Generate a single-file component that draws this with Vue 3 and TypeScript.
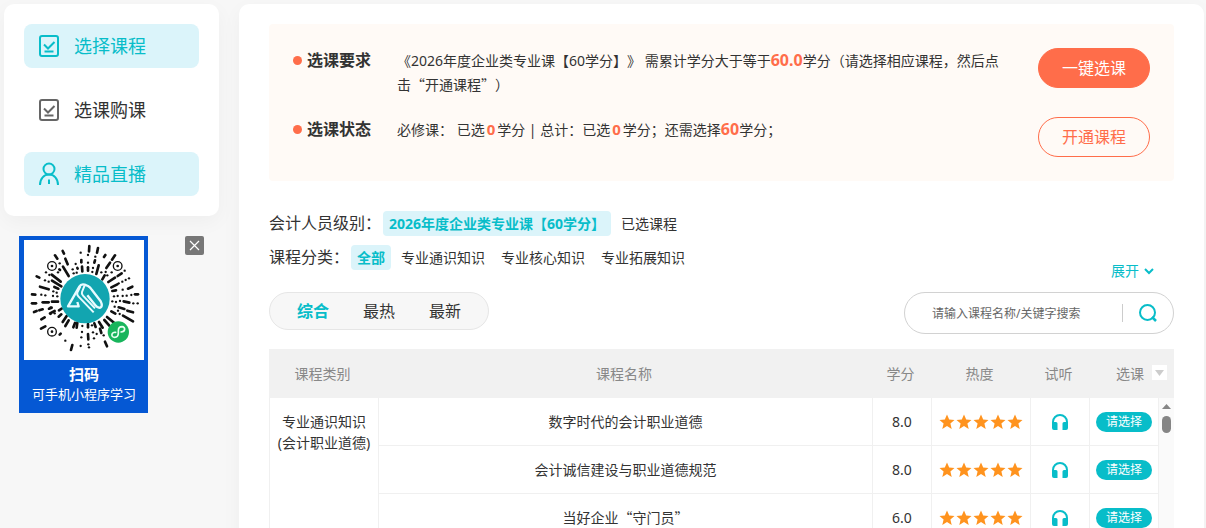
<script setup lang="ts">
import { ref } from 'vue'

interface Course {
  name: string
  credit: string
}

const menu = [
  { label: '选择课程', icon: 'check', active: true },
  { label: '选课购课', icon: 'check', active: false },
  { label: '精品直播', icon: 'user', active: true },
]

const categories = ['全部', '专业通识知识', '专业核心知识', '专业拓展知识']
const activeCategory = ref('全部')
const sorts = ['综合', '最热', '最新']
const activeSort = ref('综合')
const keyword = ref('')
const showCode = ref(true)

const courses: Course[] = [
  { name: '数字时代的会计职业道德', credit: '8.0' },
  { name: '会计诚信建设与职业道德规范', credit: '8.0' },
  { name: '当好企业“守门员”', credit: '6.0' },
]

// Strokes of the radial mini-program code: x1, y1, x2, y2
const dashes: number[][] = [
  [116, 33, 120, 41], [93, 46, 100, 56], [124, 56, 131, 73], [172, 60, 172, 67], [174, 80, 175, 94],
  [117, 80, 134, 108], [160, 84, 161, 86], [38, 109, 46, 113], [83, 104, 110, 125], [84, 122, 112, 139],
  [48, 140, 74, 148], [91, 141, 103, 146], [24, 163, 34, 164], [196, 18, 195, 34], [222, 24, 219, 38],
  [213, 61, 211, 68], [240, 51, 244, 45], [224, 76, 217, 102], [192, 82, 192, 92], [258, 68, 247, 84],
  [273, 46, 264, 59], [242, 106, 235, 118], [293, 100, 281, 108], [273, 113, 253, 126], [280, 133, 262, 142],
  [312, 146, 325, 140], [265, 153, 276, 151], [333, 163, 342, 163], [299, 184, 316, 188], [284, 202, 301, 207],
  [297, 227, 327, 244], [310, 212, 327, 217], [24, 190, 36, 190], [56, 187, 74, 187], [84, 185, 102, 185],
  [30, 216, 38, 213], [46, 211, 56, 208], [75, 206, 83, 203], [51, 266, 64, 259], [52, 238, 62, 232],
  [78, 220, 92, 213], [105, 211, 113, 206], [104, 230, 112, 223], [116, 246, 128, 228], [124, 258, 134, 241],
  [107, 284, 110, 281], [145, 315, 141, 330], [148, 262, 153, 249], [160, 248, 158, 263], [192, 282, 193, 298],
  [192, 252, 192, 262], [211, 250, 215, 261], [228, 266, 232, 279], [225, 246, 236, 263], [243, 305, 249, 319],
  [249, 231, 271, 249], [241, 240, 256, 257], [262, 214, 274, 221], [106, 88, 108, 90],
]

const dots: number[][] = [
  [170, 38], [155, 72], [146, 88], [149, 100], [158, 98], [107, 70], [102, 97], [66, 97], [76, 105],
  [63, 121], [74, 125], [88, 154], [98, 158], [52, 164], [64, 166], [87, 168], [100, 169], [192, 45], [192, 68],
  [214, 50], [207, 84], [205, 96], [232, 97], [245, 96], [302, 92], [263, 97], [250, 106], [284, 130],
  [295, 125], [305, 120], [315, 115], [296, 149], [270, 169], [281, 168], [296, 168], [308, 167], [322, 165],
  [265, 184], [276, 186], [288, 183], [328, 190], [341, 190], [272, 200], [287, 222], [80, 202], [80, 222],
  [92, 220], [124, 302], [175, 258], [174, 276], [172, 292], [170, 318], [193, 313], [207, 277], [210, 295],
  [218, 282], [195, 322], [239, 286], [204, 256], [282, 212],
]
</script>

<template>
  <div class="page">
    <aside class="side">
      <nav class="menu">
        <a v-for="m in menu" :key="m.label" href="#" class="menu-item" :class="{ active: m.active }">
          <svg v-if="m.icon === 'check'" width="22" height="24" viewBox="0 0 22 24" fill="none" stroke="currentColor" stroke-width="2">
            <rect x="2" y="2" width="18" height="20" rx="2" />
            <path d="M6 10.5 10 14.5 16.5 8M6.5 17.5H15.5" />
          </svg>
          <svg v-else width="22" height="24" viewBox="0 0 22 24" fill="none" stroke="currentColor" stroke-width="2">
            <circle cx="11" cy="7" r="5.500" />
            <path d="M2 23C2 16.500 6 12.500 11 12.500S20 16.500 20 23M11 17.500V22" />
          </svg>
          <span>{{ m.label }}</span>
        </a>
      </nav>

      <div v-if="showCode" class="code-row">
        <figure class="code">
          <svg class="code-img" viewBox="0 0 360 360" role="img" aria-label="小程序码">
            <rect width="360" height="360" fill="#fff" />
            <g stroke="#111" stroke-width="8" stroke-linecap="round">
              <line v-for="(d, i) in dashes" :key="i" :x1="d[0]" :y1="d[1]" :x2="d[2]" :y2="d[3]" />
            </g>
            <circle v-for="(d, i) in dots" :key="'d' + i" :cx="d[0]" :cy="d[1]" r="3.500" fill="#111" />
            <g v-for="(f, i) in [[84, 78], [281, 78], [84, 275]]" :key="'f' + i">
              <circle :cx="f[0]" :cy="f[1]" r="13" fill="#fff" stroke="#111" stroke-width="4" />
              <circle :cx="f[0]" :cy="f[1]" r="4" fill="#111" />
            </g>
            <circle cx="183" cy="176" r="74" fill="#12a5b0" />
            <g fill="none" stroke="#e8fbff" stroke-width="7" stroke-linejoin="round">
              <path d="M160 186 164 199H132L166 140Q171 131 182 134L192 138Q199 142 204 150L230 184Q237 199 229 203Q221 205 214 196L190 166" />
              <path d="M169 139 160 158Q158 164 163 169L209 217M182 136 174 156Q172 162 177 167L213 205" stroke-width="6" />
            </g>
            <circle cx="283" cy="276" r="32" fill="#18b55c" />
            <path d="M275 277C261 275 260 292 272 292C280 292 283 287 283 279V272C283 264 287 260 294 260C305 261 305 275 291 276" fill="none" stroke="#e6fff0" stroke-width="5" stroke-linecap="round" />
          </svg>
          <figcaption><strong>扫码</strong><span>可手机小程序学习</span></figcaption>
        </figure>
        <button class="close" type="button" aria-label="关闭" @click="showCode = false">
          <svg width="19" height="19" viewBox="0 0 19 19" stroke="#fff" stroke-width="1.200"><path d="M5 5 14 14M14 5 5 14" /></svg>
        </button>
      </div>
    </aside>

    <main class="main">
      <section class="notice">
        <div class="notice-row">
          <h2>选课要求</h2>
          <p>《2026年度企业类专业课【60学分】》 需累计学分大于等于<b>60.0</b>学分（请选择相应课程，然后点<span class="cjk">击“开通课程”）</span></p>
          <button class="pill solid" type="button">一键选课</button>
        </div>
        <div class="notice-row">
          <h2>选课状态</h2>
          <p>必修课： 已选<b class="num">0</b>学分 | 总计：已选<b class="num">0</b>学分；还需选择<b>60</b>学分；</p>
          <button class="pill" type="button">开通课程</button>
        </div>
      </section>

      <section class="filters">
        <div class="filter-list">
          <div class="filter">
            <span class="filter-label">会计人员级别：</span>
            <a href="#" class="tag on">2026年度企业类专业课【60学分】</a>
            <a href="#" class="tag">已选课程</a>
          </div>
          <div class="filter">
            <span class="filter-label">课程分类：</span>
            <a v-for="c in categories" :key="c" href="#" class="tag" :class="{ on: c === activeCategory }" @click.prevent="activeCategory = c">{{ c }}</a>
          </div>
        </div>
        <button class="expand" type="button">
          展开
          <svg width="10" height="8" viewBox="0 0 10 8" fill="none" stroke="currentColor" stroke-width="2"><path d="M1 2 5 6 9 2" /></svg>
        </button>
      </section>

      <div class="tools">
        <div class="sorts">
          <button v-for="s in sorts" :key="s" type="button" :class="{ on: s === activeSort }" @click="activeSort = s">{{ s }}</button>
        </div>
        <form class="search" @submit.prevent>
          <input v-model="keyword" type="text" aria-label="搜索课程" placeholder="请输入课程名称/关键字搜索" />
          <button type="submit" aria-label="搜索">
            <svg width="20" height="20" viewBox="0 0 20 20" fill="none" stroke="#08bdc9" stroke-width="2"><circle cx="9.500" cy="9.500" r="7.500" /><path d="M14 14 18 18" stroke-width="2.500" /></svg>
          </button>
        </form>
      </div>

      <table class="courses">
        <colgroup>
          <col class="c-kind" /><col /><col class="c-credit" /><col class="c-heat" /><col class="c-credit" /><col class="c-pick" /><col class="c-bar" />
        </colgroup>
        <thead>
          <tr>
            <th>课程类别</th>
            <th>课程名称</th>
            <th>学分</th>
            <th>热度</th>
            <th>试听</th>
            <th colspan="2">
              <div class="pick-head">
                选课
                <button type="button" aria-label="筛选"><svg width="15" height="15" viewBox="0 0 15 15"><path d="M3 5H12L7.500 11Z" fill="#ccc" /></svg></button>
              </div>
            </th>
          </tr>
        </thead>
        <tbody>
          <tr v-for="(c, i) in courses" :key="c.name">
            <td v-if="i === 0" class="kind" :rowspan="courses.length">专业通识知识<br />(会计职业道德)</td>
            <td class="name">{{ c.name }}</td>
            <td>{{ c.credit }}</td>
            <td>
              <svg class="icon" width="84" height="16" viewBox="0 0 84 16" fill="#ff931e" role="img" aria-label="5 星">
                <path v-for="n in 5" :key="n" :transform="`translate(${(n - 1) * 17} 0)`" d="M8 .5 10.200 5.600 15.500 6 11.400 9.500 12.700 15 8 12.100 3.300 15 4.600 9.500 .5 6 5.800 5.600Z" />
              </svg>
            </td>
            <td>
              <button class="listen" type="button" aria-label="试听">
                <svg class="icon" width="18" height="18" viewBox="0 0 18 18">
                  <path d="M2 12V9A7 7 0 0 1 16 9V12" fill="none" stroke="#08bdc9" stroke-width="2" />
                  <path d="M1 9H5Q6.500 9 6.500 10.500V17H3Q1 17 1 15ZM17 9H13Q11.500 9 11.500 10.500V17H15Q17 17 17 15Z" fill="#08bdc9" />
                </svg>
              </button>
            </td>
            <td><button class="pick" type="button">请选择</button></td>
            <td v-if="i === 0" class="bar" :rowspan="courses.length">
              <svg class="icon" width="9" height="5" viewBox="0 0 9 5"><path d="M0 5 4.500 0 9 5Z" fill="#858585" /></svg>
              <div class="thumb"></div>
            </td>
          </tr>
        </tbody>
      </table>
    </main>
  </div>
</template>

<style>
body {
  background: #f7f7f7;
}
</style>

<style scoped>
* {
  box-sizing: border-box;
}
.page {
  display: flex;
  align-items: flex-start;
  gap: 20px;
  height: 100vh;
  padding: 4px 2px 0 4px;
  overflow: hidden;
  font-family: "Noto Sans", "Noto Sans CJK SC", sans-serif;
  font-size: 14px;
  text-spacing-trim: space-all;
  color: #333;
}
button {
  padding: 0;
  border: 0;
  background: none;
  font: inherit;
  color: inherit;
  cursor: pointer;
}
a {
  color: inherit;
  text-decoration: none;
}
.icon {
  display: block;
  margin: 0 auto;
}
.cjk,
.name {
  font-family: "Noto Sans CJK SC", sans-serif;
}
.cjk {
  line-height: 20px;
}
.side {
  flex: none;
  width: 215px;
}
.menu {
  display: flex;
  flex-direction: column;
  gap: 20px;
  padding: 20px;
  border-radius: 10px;
  background: #fff;
  box-shadow: 0 6px 20px rgba(0, 0, 0, 0.04);
}
.menu-item {
  display: flex;
  align-items: center;
  gap: 14px;
  height: 44px;
  padding-left: 14px;
  border-radius: 8px;
  font-size: 18px;
}
.menu-item span {
  padding-bottom: 2px;
}
.menu-item svg {
  color: #666;
}
.menu-item.active {
  background: #dbf4fa;
}
.menu-item.active,
.menu-item.active svg {
  color: #08bdc9;
}
.code-row {
  display: flex;
  justify-content: space-between;
  align-items: flex-start;
  padding: 20px 15px 0;
}
.code {
  width: 129px;
  margin: 0;
  padding: 4px 4px 9px 5px;
  background: #0558d4;
  color: #fff;
}
.code-img {
  display: block;
  width: 100%;
}
.code figcaption {
  display: flex;
  flex-direction: column;
  align-items: center;
  padding-top: 4px;
  font-size: 13px;
  line-height: 20px;
  white-space: nowrap;
}
.code strong {
  font-size: 15px;
}
.close {
  width: 19px;
  height: 19px;
  border-radius: 2px;
  background: #777;
}
.close svg {
  display: block;
}
.main {
  flex: 1;
  min-width: 0;
  padding: 20px 30px;
  border-radius: 10px;
  background: #fff;
  box-shadow: 0 6px 20px rgba(0, 0, 0, 0.04);
}
.notice {
  display: flex;
  flex-direction: column;
  gap: 20px;
  padding: 24px;
  border-radius: 4px;
  background: #fffaf6;
}
.notice-row {
  display: flex;
  align-items: flex-start;
}
.notice h2 {
  display: flex;
  align-items: center;
  gap: 5px;
  width: 104px;
  margin: 0;
  font-size: 16px;
  line-height: 24px;
}
.notice h2::before {
  content: "";
  width: 9px;
  height: 9px;
  border-radius: 50%;
  background: #ff6d4a;
}
.notice p {
  flex: 1;
  margin: 0;
  padding-top: 1px;
  line-height: 24px;
}
.notice b {
  font-size: 16px;
  line-height: 16px;
  color: #ff6d4a;
}
.notice .num {
  padding: 0 2px;
  font-size: 15px;
}
.pill {
  width: 112px;
  height: 40px;
  margin-left: 32px;
  padding-bottom: 2px;
  border: 1px solid #ff6d4a;
  border-radius: 20px;
  font-size: 16px;
  color: #ff6d4a;
}
.pill.solid {
  background: #ff6d4a;
  color: #fff;
}
.filters {
  display: flex;
  justify-content: space-between;
  align-items: flex-end;
  margin-top: 30px;
}
.filter-list {
  display: flex;
  flex-direction: column;
  gap: 9px;
  padding-bottom: 11px;
}
.filter {
  display: flex;
  align-items: center;
  gap: 4px;
  line-height: 25px;
}
.filter-label {
  margin-right: -2px;
  font-size: 16px;
}
.tag {
  padding: 0 6px;
  border-radius: 4px;
}
.tag.on {
  background: #dbf4fa;
  font-weight: 700;
  color: #08bdc9;
}
.expand {
  display: flex;
  align-items: center;
  gap: 5px;
  margin-right: 20px;
  line-height: 20px;
  color: #08bdc9;
}
.tools {
  display: flex;
  justify-content: space-between;
  align-items: flex-start;
  margin: 11px 0 15px;
}
.sorts {
  display: flex;
  gap: 34px;
  height: 38px;
  padding: 0 27px 2px;
  border: 1px solid #e6e6e6;
  border-radius: 19px;
  background: #f7f7f7;
  font-size: 16px;
}
.sorts .on {
  font-weight: 700;
  color: #08bdc9;
}
.search {
  display: flex;
  align-items: center;
  width: 270px;
  height: 42px;
  padding: 0 15px 0 27px;
  border: 1px solid #d2d2d2;
  border-radius: 21px;
}
.search input {
  flex: 1;
  min-width: 0;
  padding: 0;
  border: 0;
  outline: 0;
  background: none;
  font: inherit;
  font-size: 12px;
}
.search input::placeholder {
  color: #666;
}
.search button {
  display: flex;
  align-items: center;
  justify-content: flex-end;
  width: 36px;
  height: 18px;
  border-left: 1px solid #ccc;
}
.courses {
  width: 100%;
  table-layout: fixed;
  border-spacing: 0;
  text-align: center;
}
.c-kind {
  width: 109px;
}
.c-credit {
  width: 59px;
}
.c-heat {
  width: 99px;
}
.c-pick {
  width: 69px;
}
.c-bar {
  width: 16px;
}
.courses th {
  height: 49px;
  padding: 0 2px 2px 0;
  background: #f1f1f1;
  font-weight: 400;
  color: #888;
}
.pick-head {
  display: flex;
  justify-content: flex-end;
  align-items: center;
  gap: 8px;
  padding-right: 5px;
}
.pick-head button {
  background: #fff;
}
.pick-head svg {
  display: block;
}
.courses td {
  height: 48px;
  padding: 0;
  border-left: 1px solid #f0f0f0;
  border-bottom: 1px solid #f0f0f0;
}
.courses .name {
  padding-bottom: 2px;
}
.courses .kind {
  padding-top: 13px;
  line-height: 21px;
  vertical-align: top;
}
.listen {
  display: block;
  margin: 0 auto;
}
.pick {
  display: block;
  width: 56px;
  height: 20px;
  margin: 0 auto;
  border-radius: 10px;
  background: #08bdc9;
  font-size: 12px;
  line-height: 20px;
  color: #fff;
}
.courses .bar {
  padding-top: 6px;
  background: #fafafa;
  vertical-align: top;
}
.thumb {
  width: 9px;
  height: 17px;
  margin: 7px auto 0;
  border-radius: 5px;
  background: #858585;
}
</style>
